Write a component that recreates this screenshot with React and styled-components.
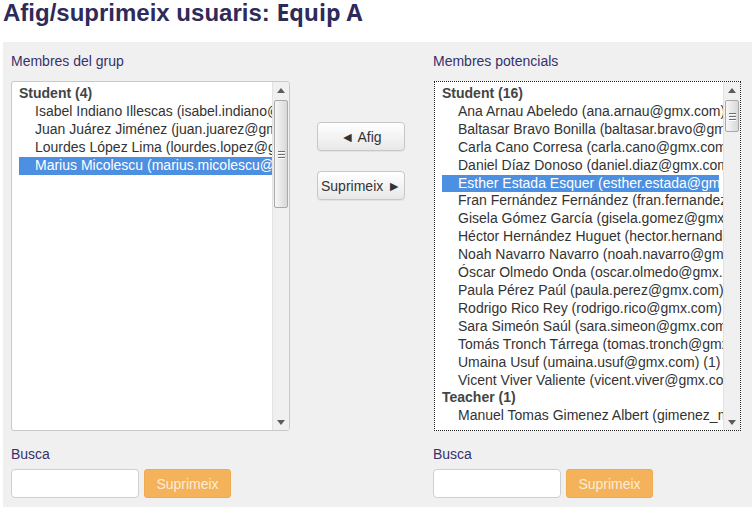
import React from 'react';
import styled, { createGlobalStyle } from 'styled-components';

const GlobalStyle = createGlobalStyle`
  html, body { margin: 0; padding: 0; background: #fff; }
  body {
    font-family: "Liberation Sans", Arial, sans-serif;
    font-size: 14px;
    color: #333;
  }
`;

const Page = styled.div`
  height: 507px;
  padding-left: 3px;
  display: flex;
  flex-direction: column;
  overflow: hidden;
`;

const Title = styled.h2`
  margin: 0 0 17px;
  font: bold 24px/24px "Liberation Sans", Arial, sans-serif;
  color: #2e2a5a;
  white-space: nowrap;
`;

const TitleName = styled.span`
  font-family: "Open Sans", "Liberation Sans", sans-serif;
  font-size: 23px;
  font-weight: 700;
`;

const Panel = styled.div`
  flex: 1;
  background: #f0f0f0;
  display: grid;
  grid-template-columns: 279px 143px 308px;
  align-content: start;
  padding: 9px 0 0 8px;
`;

const Column = styled.div`
  display: flex;
  flex-direction: column;
  min-width: 0;
`;

const FieldLabel = styled.div`
  font-size: 14px;
  line-height: 20px;
  color: #38306b;
  margin-bottom: ${(p) => p.$gap || 10}px;
  margin-top: ${(p) => p.$top || 0}px;
`;

const ListBox = styled.div`
  box-sizing: border-box;
  height: 350px;
  margin-left: ${(p) => (p.$focused ? 1 : 0)}px;
  background: #fff;
  border: 1px ${(p) => (p.$focused ? 'dotted #222' : 'solid #c9c9c9')};
  border-radius: ${(p) => (p.$focused ? 0 : 3)}px;
  display: flex;
  overflow: hidden;
`;

const ListContent = styled.div`
  flex: 1;
  min-width: 0;
  padding: 3px 0 0 7px;
  overflow: hidden;
`;

const GroupLabel = styled.div`
  font-weight: bold;
  line-height: 17.9px;
  color: #444;
  white-space: nowrap;
`;

const Option = styled.div`
  line-height: 17.9px;
  padding-left: 16px;
  margin-right: ${(p) => (p.$selected ? p.$inset || 0 : 0)}px;
  white-space: nowrap;
  overflow: hidden;
  color: ${(p) => (p.$selected ? '#fff' : '#333')};
  background: ${(p) => (p.$selected ? '#4d8fe0' : 'transparent')};
`;

const Scrollbar = styled.div`
  width: 16px;
  flex-shrink: 0;
  background: #f0f0f0;
  border-left: 1px solid #e3e3e3;
  display: flex;
  flex-direction: column;
  align-items: center;
`;

const ArrowCell = styled.div`
  height: 16px;
  width: 100%;
  display: flex;
  align-items: center;
  justify-content: center;
`;

const Thumb = styled.div`
  box-sizing: border-box;
  width: 14px;
  margin-top: 2px;
  border: 1px solid #a9a9a9;
  border-radius: 2px;
  background: linear-gradient(to right, #f7f7f7, #e4e4e4 60%, #d8d8d8);
  display: flex;
  align-items: center;
  justify-content: center;
`;

const Grip = styled.div`
  display: flex;
  flex-direction: column;
  gap: 2px;
  span {
    display: block;
    width: 7px;
    height: 1px;
    background: #6f6f6f;
    box-shadow: 0 1px 0 #fff;
  }
`;

const Track = styled.div`
  flex: 1;
`;

const Middle = styled.div`
  display: flex;
  flex-direction: column;
  align-items: center;
  gap: 20px;
  padding-top: 71px;
  padding-right: 1px;
`;

const MoveButton = styled.button`
  box-sizing: border-box;
  width: 88px;
  height: 29px;
  padding: 0;
  border: 1px solid #c8c8c8;
  border-radius: 4px;
  background: linear-gradient(#ffffff, #e8e8e8);
  box-shadow: 0 1px 1px rgba(0, 0, 0, 0.06);
  font: 14px "Liberation Sans", Arial, sans-serif;
  color: #333;
`;

const SearchRow = styled.div`
  display: flex;
  gap: 5px;
`;

const SearchInput = styled.input`
  box-sizing: border-box;
  width: 128px;
  height: 29px;
  border: 1px solid #cfcfcf;
  border-radius: 4px;
  background: #fff;
  outline: none;
`;

const ClearButton = styled.button`
  box-sizing: border-box;
  width: 87px;
  height: 29px;
  padding: 0;
  border: 1px solid #eeab52;
  border-radius: 3px;
  background: #f4b35a;
  font: 14px "Liberation Sans", Arial, sans-serif;
  color: #fcecd6;
`;

const Arrow = ({ up }) => (
  <svg width="8" height="5" viewBox="0 0 8 5">
    <polygon points={up ? '0,5 4,0 8,5' : '0,0 8,0 4,5'} fill="#5c5c5c" />
  </svg>
);

const ScrollTrack = ({ thumb }) => (
  <Scrollbar>
    <ArrowCell>
      <Arrow up />
    </ArrowCell>
    <Thumb style={{ height: thumb }}>
      <Grip>
        <span />
        <span />
        <span />
      </Grip>
    </Thumb>
    <Track />
    <ArrowCell>
      <Arrow />
    </ArrowCell>
  </Scrollbar>
);

const members = [
  {
    label: 'Student (4)',
    users: [
      'Isabel Indiano Illescas (isabel.indiano@gmx.com)',
      'Juan Juárez Jiménez (juan.juarez@gmx.com)',
      'Lourdes López Lima (lourdes.lopez@gmx.com)',
      'Marius Micolescu (marius.micolescu@gmx.com)',
    ],
  },
];

const potential = [
  {
    label: 'Student (16)',
    users: [
      'Ana Arnau Abeledo (ana.arnau@gmx.com)',
      'Baltasar Bravo Bonilla (baltasar.bravo@gmx.com)',
      'Carla Cano Corresa (carla.cano@gmx.com)',
      'Daniel Díaz Donoso (daniel.diaz@gmx.com)',
      'Esther Estada Esquer (esther.estada@gmx.com)',
      'Fran Fernández Fernández (fran.fernandez@gmx.com)',
      'Gisela Gómez García (gisela.gomez@gmx.com)',
      'Héctor Hernández Huguet (hector.hernandez@gmx.com)',
      'Noah Navarro Navarro (noah.navarro@gmx.com)',
      'Óscar Olmedo Onda (oscar.olmedo@gmx.com)',
      'Paula Pérez Paúl (paula.perez@gmx.com)',
      'Rodrigo Rico Rey (rodrigo.rico@gmx.com)',
      'Sara Simeón Saúl (sara.simeon@gmx.com)',
      'Tomás Tronch Tárrega (tomas.tronch@gmx.com)',
      'Umaina Usuf (umaina.usuf@gmx.com) (1)',
      'Vicent Viver Valiente (vicent.viver@gmx.com)',
    ],
  },
  {
    label: 'Teacher (1)',
    users: ['Manuel Tomas Gimenez Albert (gimenez_manuel@gmx.com)'],
  },
];

const UserList = ({ groups, selected, focused, thumb, inset }) => (
  <ListBox $focused={focused}>
    <ListContent>
      {groups.map((g) => (
        <div key={g.label}>
          <GroupLabel>{g.label}</GroupLabel>
          {g.users.map((u) => (
            <Option key={u} $selected={u === selected} $inset={inset}>
              {u}
            </Option>
          ))}
        </div>
      ))}
    </ListContent>
    <ScrollTrack thumb={thumb} />
  </ListBox>
);

const Search = () => (
  <>
    <FieldLabel $top={13} $gap={5}>Busca</FieldLabel>
    <SearchRow>
      <SearchInput type="text" />
      <ClearButton>Suprimeix</ClearButton>
    </SearchRow>
  </>
);

export default function App() {
  return (
    <>
      <GlobalStyle />
      <Page>
        <Title>
          Afig/suprimeix usuaris: <TitleName>Equip A</TitleName>
        </Title>
        <Panel>
          <Column>
            <FieldLabel>Membres del grup</FieldLabel>
            <UserList
              groups={members}
              selected="Marius Micolescu (marius.micolescu@gmx.com)"
              thumb={108}
            />
            <Search />
          </Column>
          <Middle>
            <MoveButton>◄ Afig</MoveButton>
            <MoveButton>Suprimeix ►</MoveButton>
          </Middle>
          <Column>
            <FieldLabel>Membres potencials</FieldLabel>
            <UserList
              groups={potential}
              selected="Esther Estada Esquer (esther.estada@gmx.com)"
              focused
              inset={4}
              thumb={32}
            />
            <Search />
          </Column>
        </Panel>
      </Page>
    </>
  );
}
